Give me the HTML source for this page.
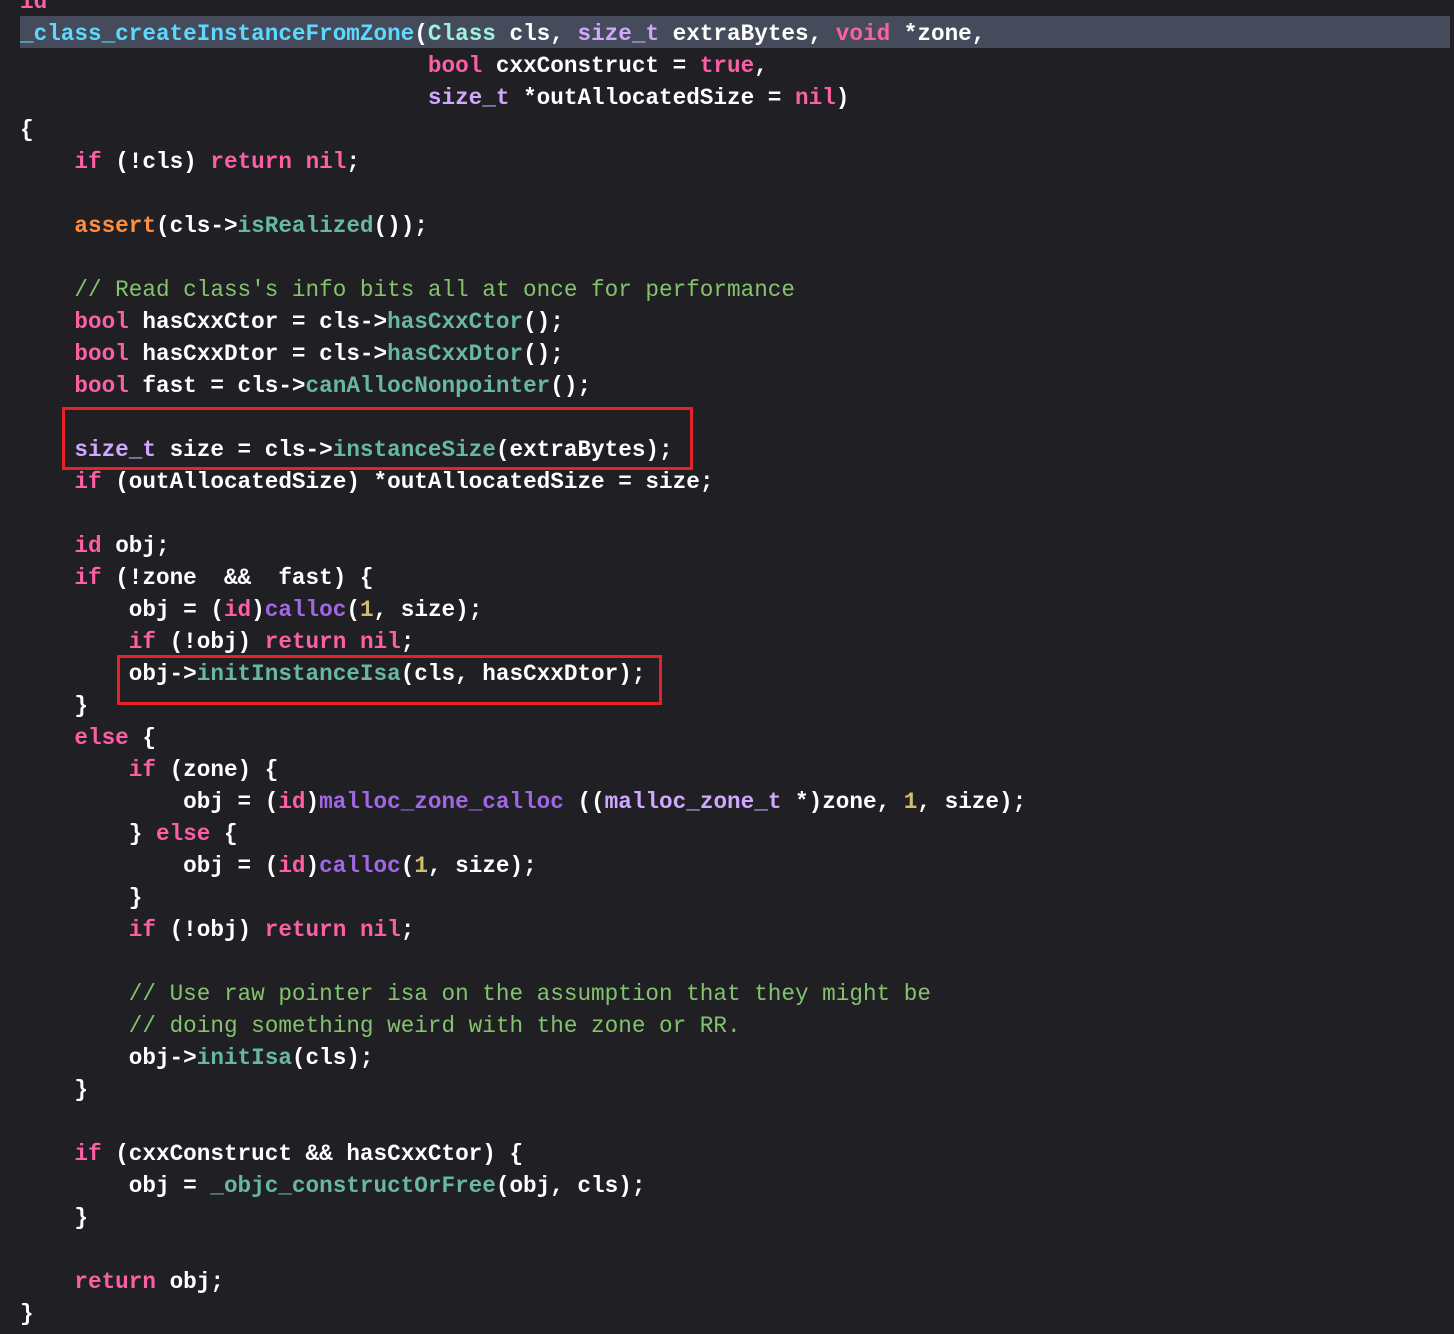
<!DOCTYPE html>
<html><head><style>
html,body{margin:0;padding:0;background:#1f1f24;width:1454px;height:1334px;overflow:hidden}
.c{position:absolute;left:20px;top:-14px;font-family:"Liberation Mono",monospace;font-size:22.67px;font-weight:bold;color:#ffffff;white-space:pre;line-height:32px}
.hl{position:absolute;left:20px;top:16px;width:1430px;height:32px;background:#464b5c}
.k{color:#fc5fa3}.t{color:#d0a8ff}.f{color:#67b7a4}.d{color:#5dd8ff}.cl{color:#9ef1dd}.p{color:#a167e5}.n{color:#d0bf69}.m{color:#fd8f3f}.cm{color:#84c36c;font-weight:normal}
.box{position:absolute;border:3px solid #e8202a}
</style></head><body>
<div class="hl"></div>
<div class="c"><span class="k">id</span>
<span class="d">_class_createInstanceFromZone</span>(<span class="cl">Class</span> cls, <span class="t">size_t</span> extraBytes, <span class="k">void</span> *zone,
                              <span class="k">bool</span> cxxConstruct = <span class="k">true</span>,
                              <span class="t">size_t</span> *outAllocatedSize = <span class="k">nil</span>)
{
    <span class="k">if</span> (!cls) <span class="k">return</span> <span class="k">nil</span>;

    <span class="m">assert</span>(cls-&gt;<span class="f">isRealized</span>());

    <span class="cm">// Read class's info bits all at once for performance</span>
    <span class="k">bool</span> hasCxxCtor = cls-&gt;<span class="f">hasCxxCtor</span>();
    <span class="k">bool</span> hasCxxDtor = cls-&gt;<span class="f">hasCxxDtor</span>();
    <span class="k">bool</span> fast = cls-&gt;<span class="f">canAllocNonpointer</span>();

    <span class="t">size_t</span> size = cls-&gt;<span class="f">instanceSize</span>(extraBytes);
    <span class="k">if</span> (outAllocatedSize) *outAllocatedSize = size;

    <span class="k">id</span> obj;
    <span class="k">if</span> (!zone  &amp;&amp;  fast) {
        obj = (<span class="k">id</span>)<span class="p">calloc</span>(<span class="n">1</span>, size);
        <span class="k">if</span> (!obj) <span class="k">return</span> <span class="k">nil</span>;
        obj-&gt;<span class="f">initInstanceIsa</span>(cls, hasCxxDtor);
    }
    <span class="k">else</span> {
        <span class="k">if</span> (zone) {
            obj = (<span class="k">id</span>)<span class="p">malloc_zone_calloc</span> ((<span class="t">malloc_zone_t</span> *)zone, <span class="n">1</span>, size);
        } <span class="k">else</span> {
            obj = (<span class="k">id</span>)<span class="p">calloc</span>(<span class="n">1</span>, size);
        }
        <span class="k">if</span> (!obj) <span class="k">return</span> <span class="k">nil</span>;

        <span class="cm">// Use raw pointer isa on the assumption that they might be</span>
        <span class="cm">// doing something weird with the zone or RR.</span>
        obj-&gt;<span class="f">initIsa</span>(cls);
    }

    <span class="k">if</span> (cxxConstruct &amp;&amp; hasCxxCtor) {
        obj = <span class="f">_objc_constructOrFree</span>(obj, cls);
    }

    <span class="k">return</span> obj;
}</div>
<div class="box" style="left:62px;top:407px;width:625px;height:57px"></div>
<div class="box" style="left:117px;top:655px;width:539px;height:44px"></div>
</body></html>
